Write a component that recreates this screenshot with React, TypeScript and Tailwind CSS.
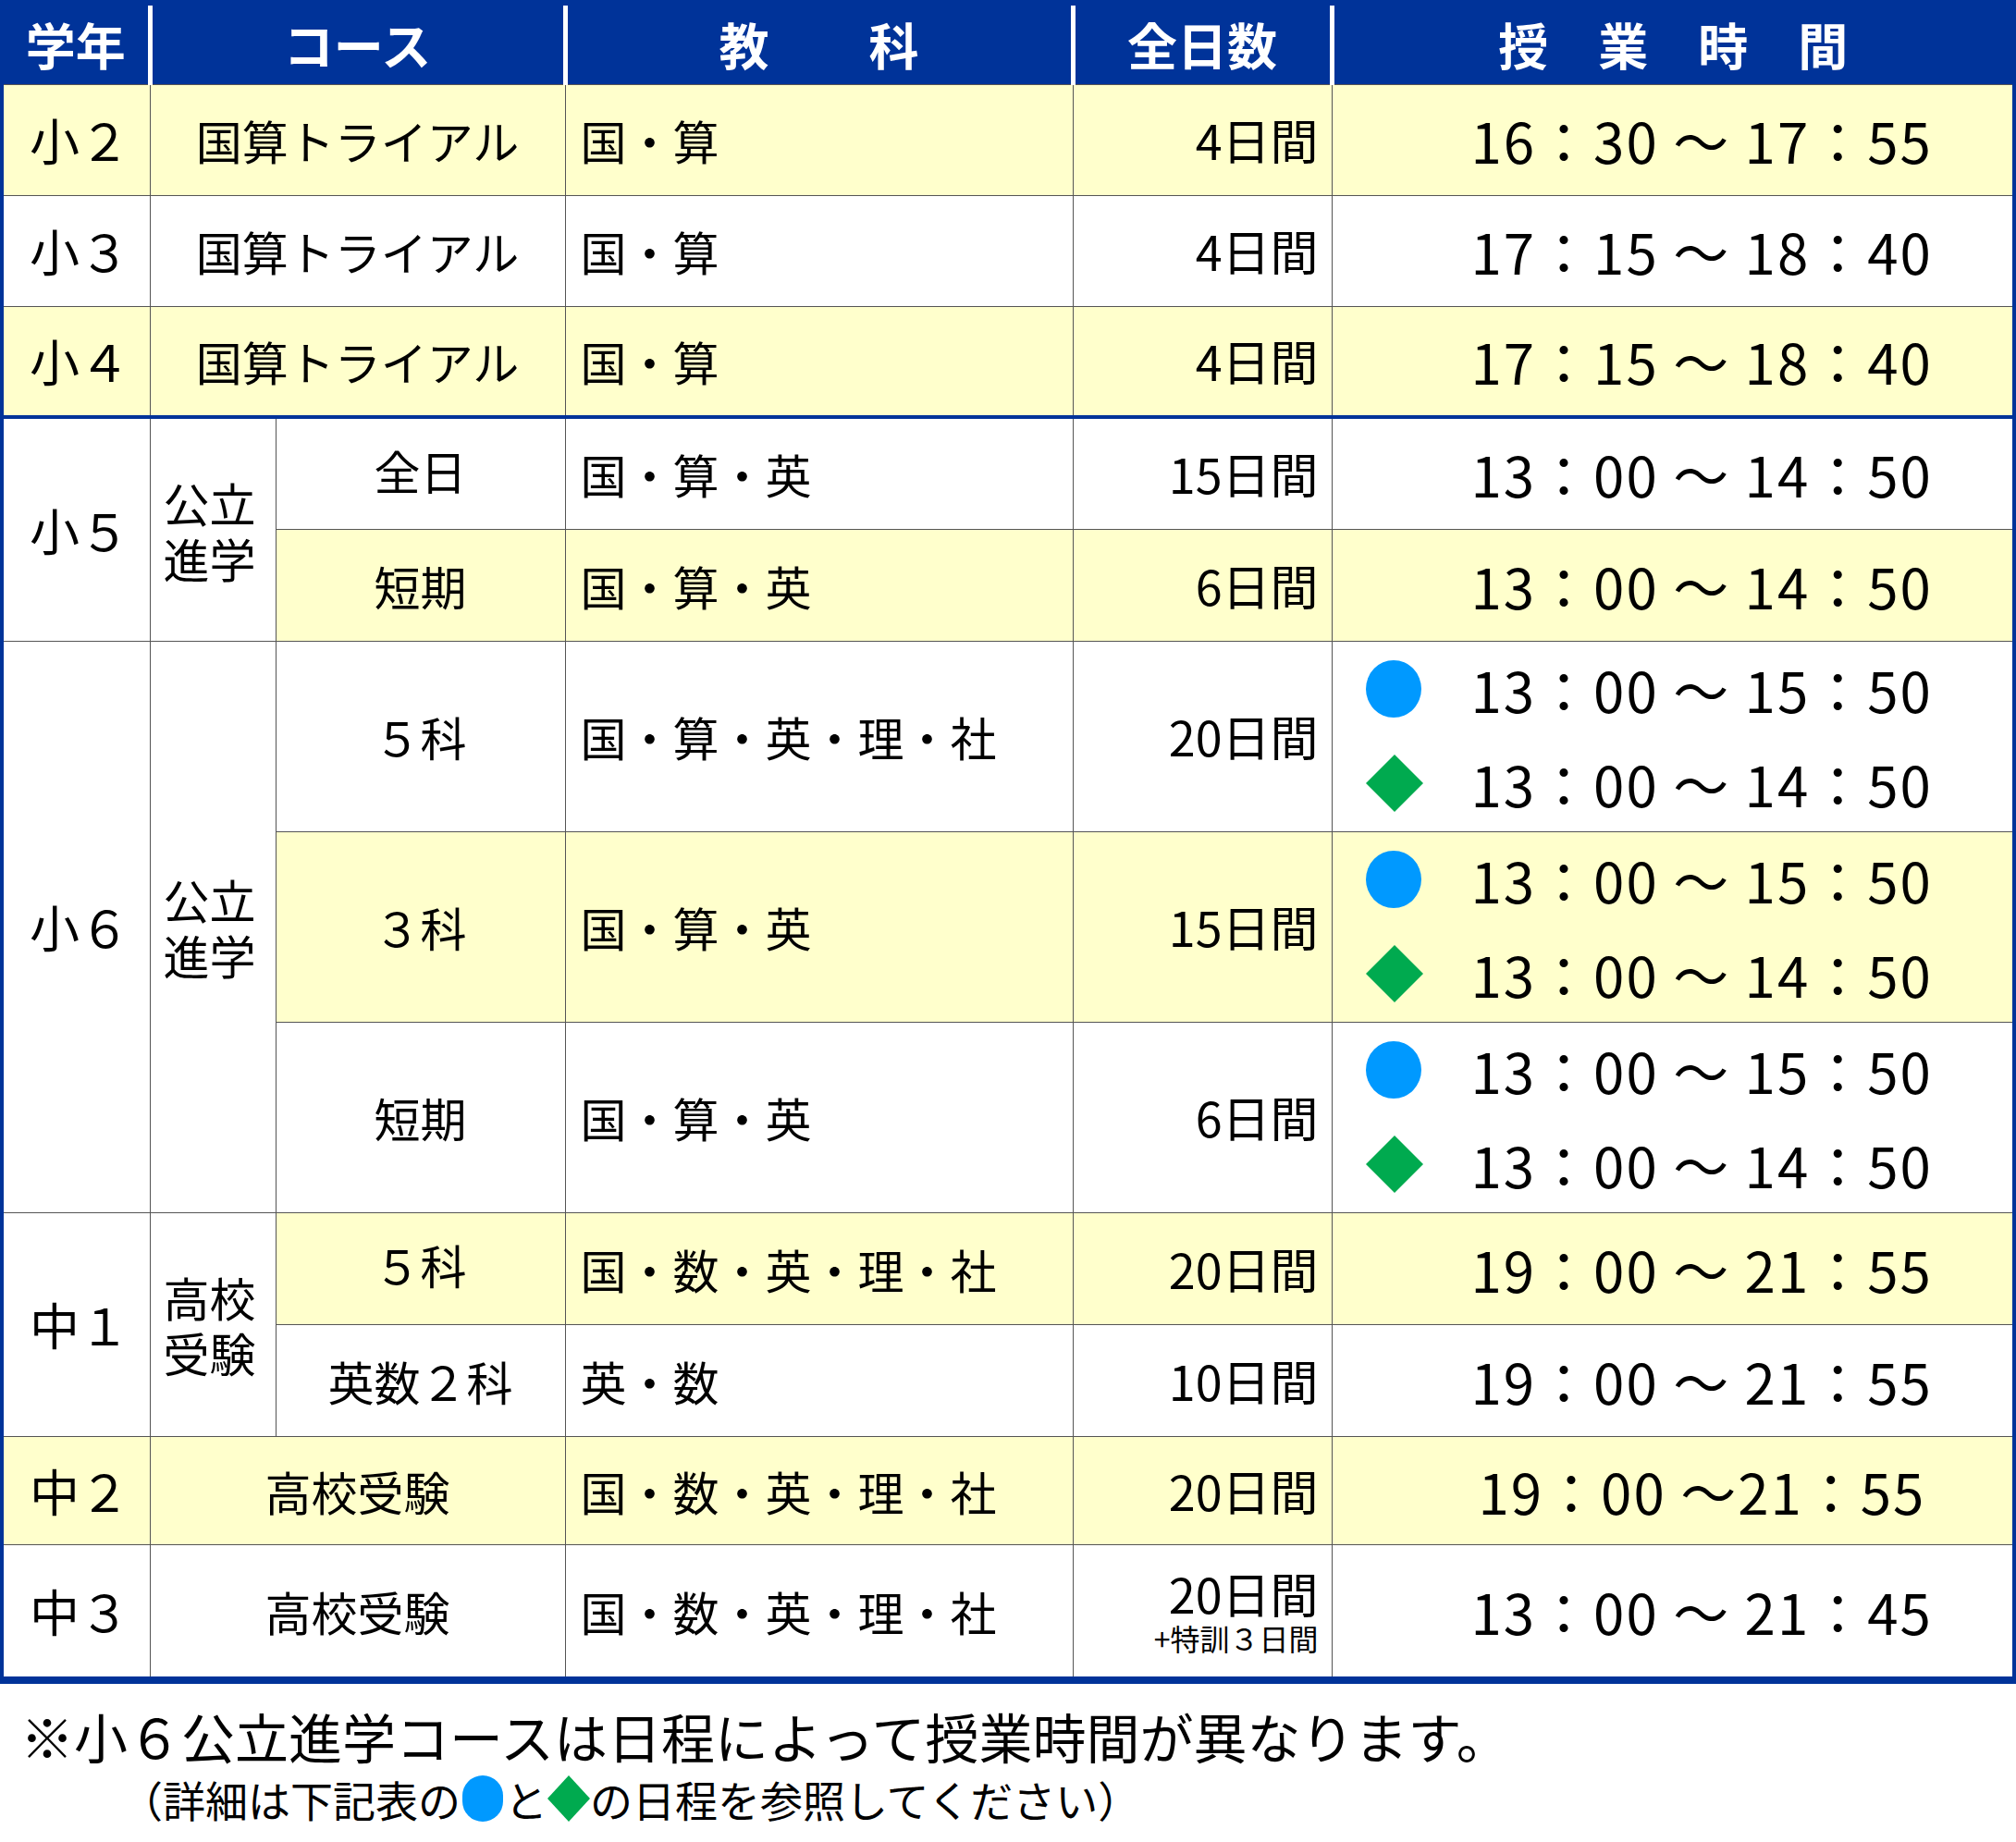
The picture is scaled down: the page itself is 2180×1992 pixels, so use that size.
import React from "react";

const Y = "bg-[#ffffcc]";
const td = "border border-[#555] p-0 align-middle";
const F = { fontFamily: '"Noto Sans CJK JP", "Noto Sans", sans-serif' };

function Circle() {
  return <svg width="60" height="62" viewBox="0 0 60 62"><ellipse cx="30" cy="31" rx="30" ry="31" fill="#0099ff" /></svg>;
}
function Diamond() {
  return <svg width="62" height="62" viewBox="0 0 62 62"><polygon points="31,0 62,31 31,62 0,31" fill="#00aa4f" /></svg>;
}

function Time({ t }: { t: string }) {
  return <div className="pl-[150px] text-[60px] leading-none whitespace-nowrap tracking-[2px]">{t}</div>;
}
function Dual() {
  return (
    <div className="flex flex-col gap-[40px] pl-[36px]">
      <div className="flex items-center gap-[54px] h-[62px]"><Circle /><span className="text-[60px] leading-none whitespace-nowrap tracking-[2px]">13：00 ～ 15：50</span></div>
      <div className="flex items-center gap-[52px] h-[62px]"><Diamond /><span className="text-[60px] leading-none whitespace-nowrap tracking-[2px]">13：00 ～ 14：50</span></div>
    </div>
  );
}

export default function App() {
  const grade = `${td} pl-[28px] text-[54px] leading-none`;
  const subj = `${td} pl-[16px] text-[50px] leading-none`;
  const days = `${td} pr-[14px] text-right text-[52px] leading-none`;
  const center = `${td} text-center text-[50px] leading-none`;
  const two = `${td} text-[50px] leading-[60px] pl-[14px]`;
  return (
    <div className="w-[2180px] h-[1992px] bg-white text-black overflow-hidden" style={F}>
      <table className="table-fixed border-collapse w-[2180px] border-l-[4px] border-r-[4px] border-t-[6px] border-b-[8px] border-[#003399]">
        <colgroup>
          <col className="w-[160px]" />
          <col className="w-[136px]" />
          <col className="w-[313px]" />
          <col className="w-[549px]" />
          <col className="w-[280px]" />
          <col />
        </colgroup>
        <thead>
          <tr className="h-[88px] bg-[#003399] text-white font-bold text-[54px] leading-none">
            <th className="border-r-[5px] border-white text-center">学年</th>
            <th colSpan={2} className="border-r-[5px] border-white text-center">コース</th>
            <th className="border-r-[5px] border-white text-center">教　　科</th>
            <th className="border-r-[5px] border-white text-center">全日数</th>
            <th className="text-center">授　業　時　間</th>
          </tr>
        </thead>
        <tbody>
          {["小２", "小３", "小４"].map((g, i) => (
            <tr key={g} className={`h-[120px] ${i !== 1 ? Y : ""} ${i === 2 ? "border-b-[4px] border-b-[#003399]" : ""}`}>
              <td className={grade}>{g}</td>
              <td colSpan={2} className={center}>国算トライアル</td>
              <td className={subj}>国・算</td>
              <td className={days}>4日間</td>
              <td className={td}><Time t={i === 0 ? "16：30 ～ 17：55" : "17：15 ～ 18：40"} /></td>
            </tr>
          ))}
          <tr className="h-[121px]">
            <td rowSpan={2} className={grade}>小５</td>
            <td rowSpan={2} className={two}>公立<br />進学</td>
            <td className={`${center} align-top pt-[30px]`}>全日</td>
            <td className={subj}>国・算・英</td>
            <td className={days}>15日間</td>
            <td className={td}><Time t="13：00 ～ 14：50" /></td>
          </tr>
          <tr className={`h-[121px] ${Y}`}>
            <td className={center}>短期</td>
            <td className={subj}>国・算・英</td>
            <td className={days}>6日間</td>
            <td className={td}><Time t="13：00 ～ 14：50" /></td>
          </tr>
          <tr className="h-[206px]">
            <td rowSpan={3} className={`${grade} bg-white`}>小６</td>
            <td rowSpan={3} className={`${two} bg-white`}>公立<br />進学</td>
            <td className={center}>５科</td>
            <td className={subj}>国・算・英・理・社</td>
            <td className={days}>20日間</td>
            <td className={td}><Dual /></td>
          </tr>
          <tr className={`h-[206px] ${Y}`}>
            <td className={center}>３科</td>
            <td className={subj}>国・算・英</td>
            <td className={days}>15日間</td>
            <td className={td}><Dual /></td>
          </tr>
          <tr className="h-[206px]">
            <td className={center}>短期</td>
            <td className={subj}>国・算・英</td>
            <td className={days}>6日間</td>
            <td className={td}><Dual /></td>
          </tr>
          <tr className={`h-[121px] ${Y}`}>
            <td rowSpan={2} className={`${grade} bg-white`}>中１</td>
            <td rowSpan={2} className={`${two} bg-white`}>高校<br />受験</td>
            <td className={`${center} align-top pt-[30px]`}>５科</td>
            <td className={subj}>国・数・英・理・社</td>
            <td className={days}>20日間</td>
            <td className={td}><Time t="19：00 ～ 21：55" /></td>
          </tr>
          <tr className="h-[121px]">
            <td className={center}>英数２科</td>
            <td className={subj}>英・数</td>
            <td className={days}>10日間</td>
            <td className={td}><Time t="19：00 ～ 21：55" /></td>
          </tr>
          <tr className={`h-[117px] ${Y}`}>
            <td className={grade}>中２</td>
            <td colSpan={2} className={center}>高校受験</td>
            <td className={subj}>国・数・英・理・社</td>
            <td className={days}>20日間</td>
            <td className={td}><div className="pl-[158px] text-[60px] leading-none whitespace-nowrap tracking-[2px]">19：00 ～21：55</div></td>
          </tr>
          <tr className="h-[147px]">
            <td className={grade}>中３</td>
            <td colSpan={2} className={center}>高校受験</td>
            <td className={subj}>国・数・英・理・社</td>
            <td className={`${td} pr-[14px] text-right`}>
              <div className="text-[52px] leading-[58px]">20日間</div>
              <div className="text-[32px] leading-[38px]">+特訓３日間</div>
            </td>
            <td className={td}><Time t="13：00 ～ 21：45" /></td>
          </tr>
        </tbody>
      </table>
      <div className="pl-[22px] pt-[20px] text-[58px] leading-[72px] whitespace-nowrap">※小６公立進学コースは日程によって授業時間が異なります。</div>
      <div className="pl-[130px] text-[46px] leading-[64px] flex items-center whitespace-nowrap">
        （詳細は下記表の<span className="inline-block w-[44px] h-[50px] rounded-full bg-[#0099ff] mx-[2px]" />と
        <svg width="46" height="50" viewBox="0 0 46 50"><polygon points="23,0 46,25 23,50 0,25" fill="#00aa4f" /></svg>
        の日程を参照してください）
      </div>
    </div>
  );
}
